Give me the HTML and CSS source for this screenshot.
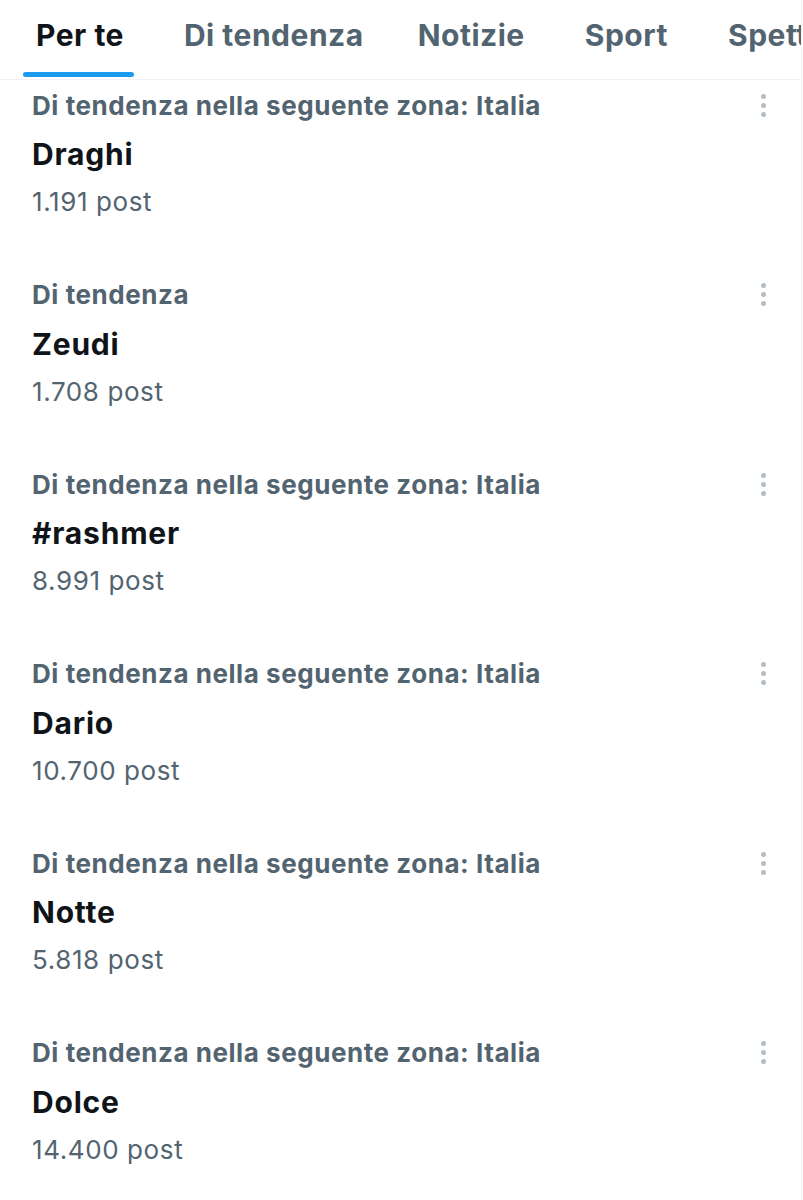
FILE: index.html
```html
<!DOCTYPE html>
<html lang="it">
<head>
    <meta charset="UTF-8">
    <meta name="viewport" content="width=device-width, initial-scale=1.0">
    <title>Esplora</title>
    <link rel="stylesheet" href="styles.css">
</head>
<body>
    <div class="page">
        <nav class="tabs">
            <div class="tab active">Per te<span class="indicator"></span></div>
            <div class="tab">Di tendenza</div>
            <div class="tab">Notizie</div>
            <div class="tab">Sport</div>
            <div class="tab">Spettacolo</div>
        </nav>

        <ul class="trends">
            <li class="trend">
                <div class="trend-head">
                    <span class="trend-context">Di tendenza nella seguente zona: Italia</span>
                    <span class="more"><i></i><i></i><i></i></span>
                </div>
                <div class="trend-name">Draghi</div>
                <div class="trend-count">1.191 post</div>
            </li>
            <li class="trend">
                <div class="trend-head">
                    <span class="trend-context">Di tendenza</span>
                    <span class="more"><i></i><i></i><i></i></span>
                </div>
                <div class="trend-name">Zeudi</div>
                <div class="trend-count">1.708 post</div>
            </li>
            <li class="trend">
                <div class="trend-head">
                    <span class="trend-context">Di tendenza nella seguente zona: Italia</span>
                    <span class="more"><i></i><i></i><i></i></span>
                </div>
                <div class="trend-name">#rashmer</div>
                <div class="trend-count">8.991 post</div>
            </li>
            <li class="trend">
                <div class="trend-head">
                    <span class="trend-context">Di tendenza nella seguente zona: Italia</span>
                    <span class="more"><i></i><i></i><i></i></span>
                </div>
                <div class="trend-name">Dario</div>
                <div class="trend-count">10.700 post</div>
            </li>
            <li class="trend">
                <div class="trend-head">
                    <span class="trend-context">Di tendenza nella seguente zona: Italia</span>
                    <span class="more"><i></i><i></i><i></i></span>
                </div>
                <div class="trend-name">Notte</div>
                <div class="trend-count">5.818 post</div>
            </li>
            <li class="trend">
                <div class="trend-head">
                    <span class="trend-context">Di tendenza nella seguente zona: Italia</span>
                    <span class="more"><i></i><i></i><i></i></span>
                </div>
                <div class="trend-name">Dolce</div>
                <div class="trend-count">14.400 post</div>
            </li>
        </ul>
    </div>
</body>
</html>
```

FILE: styles.css
```css
body {
    margin: 0;
    padding: 0;
    background: #ffffff;
    font-family: Inter, "Liberation Sans", sans-serif;
    color: #0f1419;
}
.page {
    width: 801px;
    height: 1200px;
    border-right: 1px solid #eff3f4;
    overflow: hidden;
}
.tabs {
    display: flex;
    height: 79px;
    padding-left: 6px;
    border-bottom: 1px solid #eff3f4;
    white-space: nowrap;
    overflow: hidden;
}
.tab {
    position: relative;
    padding: 0 30px;
    line-height: 70px;
    font-size: 30px;
    font-weight: 700;
    color: #536471;
    letter-spacing: 0.5px;
}
.tab:nth-child(2) {
    padding-right: 24px;
}
.tab.active {
    color: #0f1419;
}
.indicator {
    position: absolute;
    left: 17px;
    right: 20px;
    top: 72px;
    height: 5px;
    border-radius: 3px;
    background: #1d9bf0;
}
.trends {
    list-style: none;
    margin: 0;
    padding: 0;
}
.trend {
    padding: 8px 35px 49.6px 32px;
}
.trend-head {
    display: flex;
    justify-content: space-between;
    align-items: center;
    height: 34px;
}
.trend-context {
    font-size: 26px;
    font-weight: 700;
    color: #536471;
    letter-spacing: 0.55px;
}
.more {
    display: flex;
    flex-direction: column;
    gap: 4px;
}
.more i {
    width: 5px;
    height: 5px;
    border-radius: 50%;
    background: #b3bec7;
}
.trend-name {
    margin-top: 12px;
    line-height: 40px;
    font-size: 30px;
    font-weight: 700;
    letter-spacing: 0.8px;
}
.trend-count {
    margin-top: 10px;
    line-height: 36px;
    font-size: 26px;
    color: #536471;
    letter-spacing: 0.6px;
}
```
